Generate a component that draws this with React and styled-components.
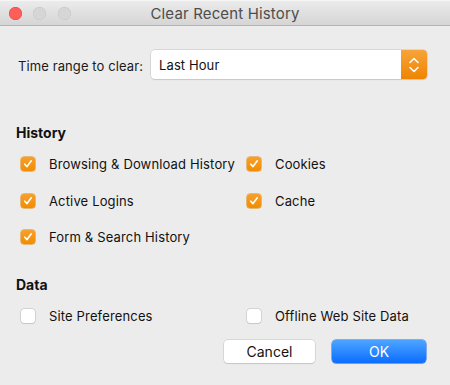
import React, {useState} from "react";
import styled, {createGlobalStyle} from "styled-components";

const GlobalStyle = createGlobalStyle`
  html, body {
    margin: 0;
    padding: 0;
    background: #ececec;
  }
  body {
    font-family: Inter, "Liberation Sans", sans-serif;
    -webkit-font-smoothing: antialiased;
  }
`;

const historyItems = [
  {id: "browsing", label: "Browsing & Download History", checked: true},
  {id: "cookies", label: "Cookies", checked: true},
  {id: "logins", label: "Active Logins", checked: true},
  {id: "cache", label: "Cache", checked: true},
  {id: "forms", label: "Form & Search History", checked: true},
];

const dataItems = [
  {id: "prefs", label: "Site Preferences", checked: false},
  {id: "offline", label: "Offline Web Site Data", checked: false},
];

export default function App() {
  const [checks, setChecks] = useState(() => {
    const all = {};
    [...historyItems, ...dataItems].forEach(i => (all[i.id] = i.checked));
    return all;
  });

  const toggle = id => setChecks({...checks, [id]: !checks[id]});

  const renderItem = item => (
    <CheckRow key={item.id} onClick={() => toggle(item.id)}>
      <Box $checked={checks[item.id]}>
        {checks[item.id] && (
          <svg width="10" height="10" viewBox="0 0 10 10">
            <path
              d="M1.8 5.2 L4 7.6 L8.3 1.8"
              fill="none"
              stroke="#fff"
              strokeWidth="1.6"
              strokeLinecap="round"
              strokeLinejoin="round"
            />
          </svg>
        )}
      </Box>
      <Label>{item.label}</Label>
    </CheckRow>
  );

  return (
    <>
      <GlobalStyle />
      <Window>
        <TitleBar>
          <Lights>
            <Light $color="#fc5f57" $border="#e2463f" />
            <Light $color="#d6d6d6" $border="#c4c4c4" />
            <Light $color="#d6d6d6" $border="#c4c4c4" />
          </Lights>
          <Title>Clear Recent History</Title>
        </TitleBar>
        <Body>
          <RangeRow>
            <RangeLabel>Time range to clear:</RangeLabel>
            <Select>
              <SelectValue>Last Hour</SelectValue>
              <SelectArrows>
                <svg width="12" height="20" viewBox="0 0 12 20">
                  <path
                    d="M2 7.5 L6 3.5 L10 7.5 M2 12.5 L6 16.5 L10 12.5"
                    fill="none"
                    stroke="#fff"
                    strokeWidth="1.6"
                    strokeLinecap="round"
                    strokeLinejoin="round"
                  />
                </svg>
              </SelectArrows>
            </Select>
          </RangeRow>

          <Section>
            <SectionTitle>History</SectionTitle>
            <Grid>{historyItems.map(renderItem)}</Grid>
          </Section>

          <Section $data>
            <SectionTitle>Data</SectionTitle>
            <Grid>{dataItems.map(renderItem)}</Grid>
          </Section>

          <Buttons>
            <Button>Cancel</Button>
            <Button $primary>OK</Button>
          </Buttons>
        </Body>
      </Window>
    </>
  );
}

const Window = styled.div`
  width: 450px;
  height: 385px;
  background: #ececec;
  overflow: hidden;
`;

const TitleBar = styled.div`
  position: relative;
  height: 26px;
  box-sizing: border-box;
  display: flex;
  align-items: center;
  justify-content: center;
  background: linear-gradient(#ebebeb, #d5d5d5);
  border-top: 1px solid #f6f6f6;
  border-bottom: 1px solid #b4b4b4;
`;

const Lights = styled.div`
  position: absolute;
  left: 8.5px;
  top: 6px;
  display: flex;
  gap: 11.5px;
`;

const Light = styled.span`
  width: 13px;
  height: 13px;
  border-radius: 50%;
  background: ${p => p.$color};
  box-shadow: inset 0 0 0 0.5px ${p => p.$border};
`;

const Title = styled.div`
  font-size: 15px;
  color: #4d4d4d;
  letter-spacing: 0.15px;
`;

const Body = styled.div`
  padding: 24px 0 0 16px;
`;

const RangeRow = styled.div`
  display: flex;
  align-items: center;
  gap: 8px;
  padding-left: 2px;
`;

const RangeLabel = styled.div`
  font-size: 13px;
  color: #1a1a1a;
  letter-spacing: 0.1px;
  padding-top: 2px;
`;

const Select = styled.div`
  width: 276px;
  height: 29px;
  display: flex;
  background: #fff;
  border-radius: 4px;
  box-shadow: 0 0 0 0.5px #c2c2c2, 0 1px 1px rgba(0, 0, 0, 0.12);
  overflow: hidden;
`;

const SelectValue = styled.div`
  flex: 1;
  display: flex;
  align-items: center;
  padding: 1px 0 0 8px;
  font-size: 13px;
  color: #111;
  letter-spacing: 0.1px;
`;

const SelectArrows = styled.div`
  width: 26px;
  display: flex;
  align-items: center;
  justify-content: center;
  background: linear-gradient(#f7a43a, #f08400);
`;

const Section = styled.div`
  margin-top: ${p => (p.$data ? "10px" : "45px")};
`;

const SectionTitle = styled.div`
  font-size: 14px;
  font-weight: 700;
  color: #111;
  margin-bottom: 15px;
`;

const Grid = styled.div`
  display: grid;
  grid-template-columns: 226px 1fr;
  grid-auto-rows: 36.5px;
  padding-left: 5px;
`;

const CheckRow = styled.div`
  display: flex;
  align-items: center;
  height: 16px;
  cursor: default;
`;

const Box = styled.span`
  width: 14px;
  height: 14px;
  box-sizing: border-box;
  border-radius: 3px;
  display: flex;
  align-items: center;
  justify-content: center;
  background: ${p => (p.$checked ? "linear-gradient(#f7a02c, #f28c00)" : "#fff")};
  box-shadow: ${p =>
    p.$checked
      ? "0 0 0 0.5px #e08400"
      : "0 0 0 0.5px #b9b9b9, 0 1px 1px rgba(0,0,0,0.1)"};
`;

const Label = styled.span`
  margin-left: 14px;
  font-size: 13px;
  color: #111;
  white-space: nowrap;
  letter-spacing: 0.15px;
`;

const Buttons = styled.div`
  display: flex;
  justify-content: flex-end;
  gap: 17px;
  padding-right: 24px;
  margin-top: -4px;
`;

const Button = styled.button`
  width: ${p => (p.$primary ? "94px" : "91px")};
  height: 23px;
  border: none;
  border-radius: 4px;
  font-family: Inter, "Liberation Sans", sans-serif;
  font-size: 14px;
  color: ${p => (p.$primary ? "#fff" : "#111")};
  background: ${p => (p.$primary ? "linear-gradient(#4ea5ff, #0a6dff)" : "#fff")};
  box-shadow: ${p =>
    p.$primary
      ? "0 0 0 0.5px #1a6fe8, 0 1px 1px rgba(0,0,0,0.12)"
      : "0 0 0 0.5px #c4c4c4, 0 1px 1px rgba(0,0,0,0.15)"};
  padding: 0;
`;
